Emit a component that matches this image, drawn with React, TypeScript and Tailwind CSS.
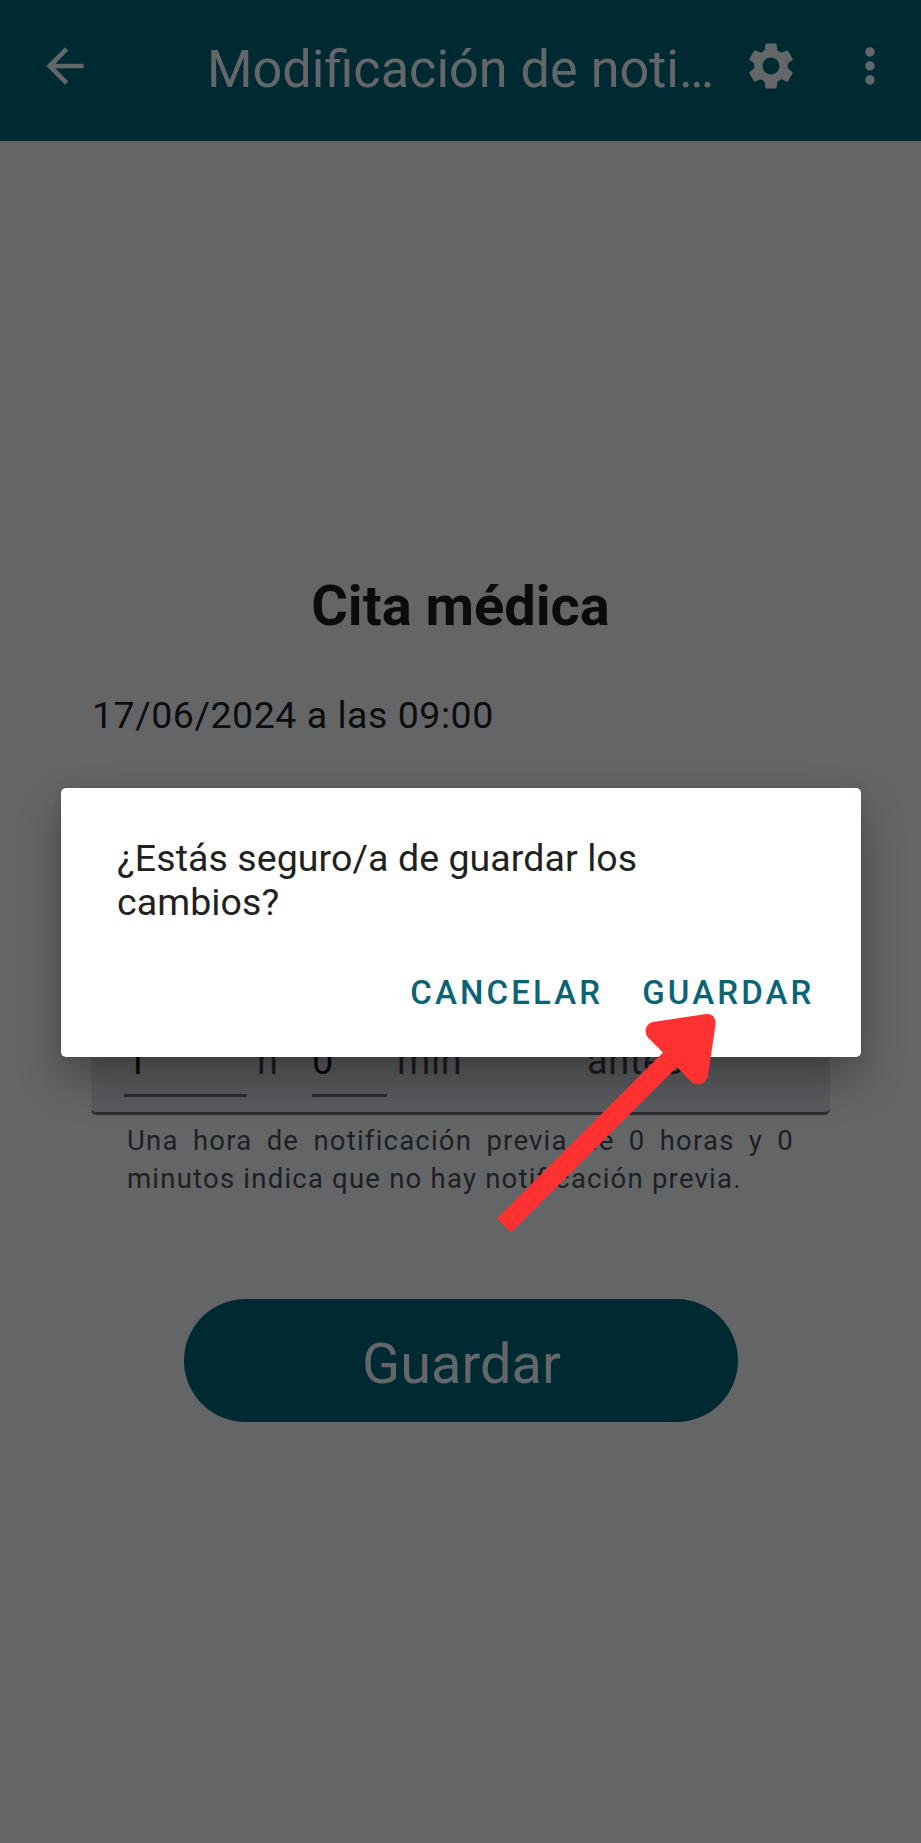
import { MdArrowBack, MdMoreVert, MdSettings } from "react-icons/md";

function TopBar() {
  return (
    <header className="flex h-[141px] shrink-0 bg-[#002a32] pt-[38px] text-[#64676a]">
      <button className="ml-[37px] size-[56px]" aria-label="Atrás">
        <MdArrowBack className="size-[56px]" />
      </button>
      <h1 className="ml-[114px] w-[505px] whitespace-nowrap pt-[0.5px] text-[52.2px] leading-[62px]">
        Modificación de noti…
      </h1>
      <button className="ml-[31px] size-[56px]" aria-label="Ajustes">
        <MdSettings className="size-[56px]" />
      </button>
      <button className="ml-[43px] size-[56px]" aria-label="Más">
        <MdMoreVert className="size-[56px]" />
      </button>
    </header>
  );
}

function NoticeField() {
  return (
    <div className="mt-[63px] flex h-[315px] items-end rounded-[6px] border-b-3 border-[#2d2e32] bg-[#5a5b5e] pl-[33px] text-[38px] leading-[44px] text-[#1c1d20]">
      <div className="flex h-[92px] w-full items-start">
        <div className="h-[77px] w-[123px] rounded-[1px] border-b-3 border-[#2a2b30] pt-[19px] pl-[2px] text-[#08090a]">1</div>
        <span className="ml-[10px] w-[55px] pt-[19px]">h</span>
        <div className="h-[77px] w-[75px] rounded-[1px] border-b-3 border-[#2a2b30] pt-[19px] text-[#08090a]">0</div>
        <span className="ml-[10px] w-[190px] pt-[19px] tracking-[0.6px]">min</span>
        <span className="pt-[19px] tracking-[0.6px]">antes</span>
      </div>
    </div>
  );
}

function ConfirmDialog() {
  return (
    <div
      role="dialog"
      className="absolute top-[787.5px] left-[60.5px] flex h-[269.5px] w-[800px] flex-col rounded-[5px] bg-white shadow-[0_22px_44px_rgba(0,0,0,0.3),0_0_10px_rgba(0,0,0,0.1)]"
    >
      <p className="mt-[48.5px] ml-[56.5px] w-[600px] text-[37.5px] leading-[44.4px] tracking-[0.08px] text-[#212121]">
        ¿Estás seguro/a de guardar los cambios?
      </p>
      <div className="mt-[48px] flex justify-end gap-[39px] pr-[46px] text-[33px] leading-[40px] font-medium tracking-[3.15px] text-[#0b6475]">
        <button>CANCELAR</button>
        <button>GUARDAR</button>
      </div>
    </div>
  );
}

function PointerArrow() {
  return (
    <svg
      className="pointer-events-none absolute top-[1000px] left-[480px]"
      width="250"
      height="250"
      viewBox="480 1000 250 250"
      fill="#ff3131"
    >
      <path d="M497 1218.5 L663 1052.6 L648.7 1038.3 C642.5 1032 646 1022.5 654.5 1021.7 L706 1014.1 C712 1013.5 716.2 1018 715.6 1024 L708.2 1074.5 C707 1083.500 697 1087.500 691 1081.500 L677 1067 L511 1232.500 Z" />
    </svg>
  );
}

export default function App() {
  return (
    <div className="relative flex h-[1843px] w-[921px] flex-col overflow-hidden bg-[#646567] font-[Roboto,sans-serif]">
      <TopBar />
      <main className="flex flex-col px-[91px] pt-[432px]">
        <h2 className="text-center text-[56px] leading-[66px] font-bold text-[#0a0b0c]">Cita médica</h2>
        <p className="mt-[54px] ml-[1px] text-[37.5px] leading-[44px] tracking-[0.53px] text-[#0c0d0e]">17/06/2024 a las 09:00</p>
        <NoticeField />
        <p className="mt-[7px] ml-[36px] w-[667px] text-justify text-[27.5px] leading-[37.6px] tracking-[1.22px] text-[#1e1f23]">
          Una hora de notificación previa de 0 horas y 0 minutos indica que no hay notificación previa.
        </p>
        <button className="mt-[102px] h-[123px] w-[554px] self-center rounded-full bg-[#002a32] pt-[6px] pl-[2px] text-[56px] leading-[66px] text-[#64676a]">
          Guardar
        </button>
      </main>
      <ConfirmDialog />
      <PointerArrow />
    </div>
  );
}
